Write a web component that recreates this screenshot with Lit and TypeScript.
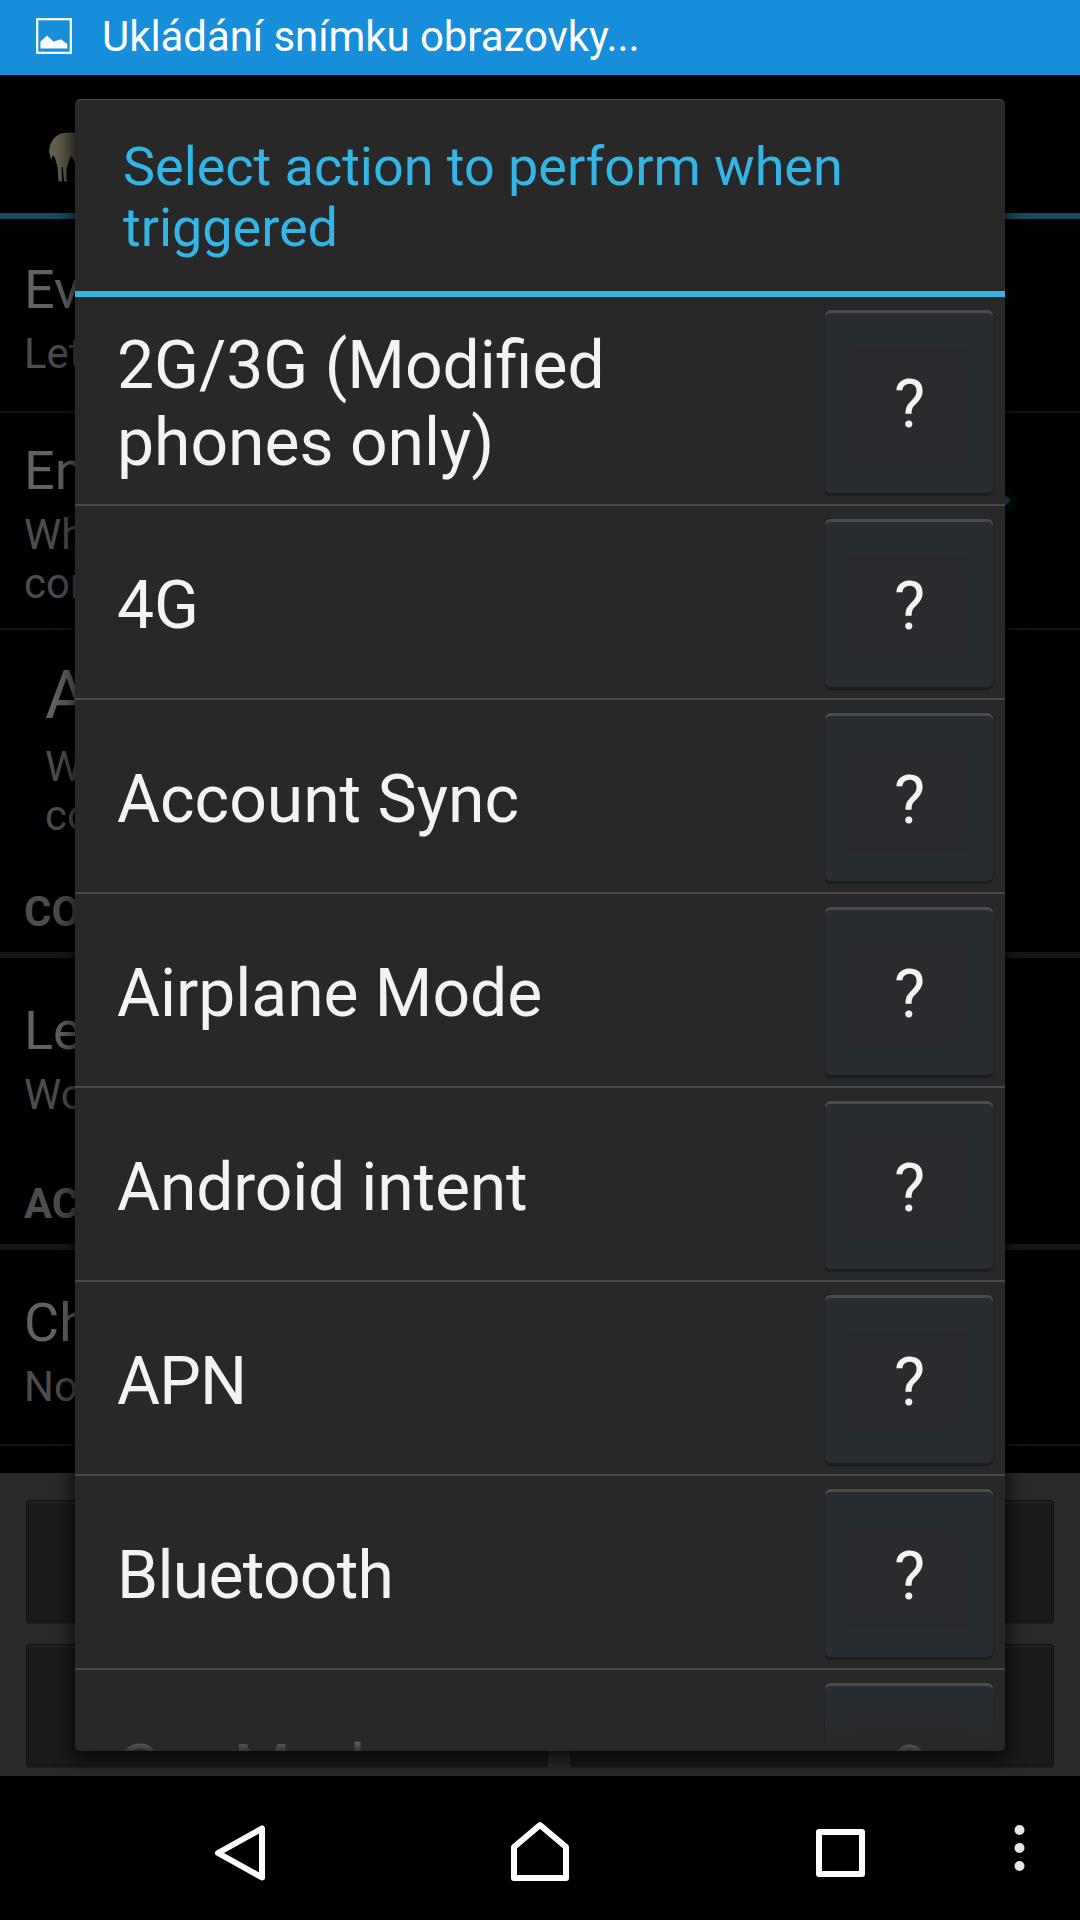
import { LitElement, html, css, nothing } from "lit";
import { customElement, property } from "lit/decorators.js";
import { styleMap } from "lit/directives/style-map.js";

interface BackItem {
  cls: string;
  title?: string;
  lines: string[];
}

interface Action {
  label: string;
  tracking?: number;
}

const BACK_ITEMS: BackItem[] = [
  { cls: "item first", title: "Ev", lines: ["Let"] },
  { cls: "item second", title: "En", lines: ["Wh", "con"] },
  { cls: "item nested", title: "A", lines: ["W", "co"] },
  { cls: "section conditions", lines: ["CO"] },
  { cls: "item plain", title: "Le", lines: ["Wo"] },
  { cls: "section actions", lines: ["AC"] },
  { cls: "item last", title: "Ch", lines: ["No"] },
];

const ACTIONS: Action[] = [
  { label: "2G/3G (Modified phones only)" },
  { label: "4G" },
  { label: "Account Sync" },
  { label: "Airplane Mode", tracking: -0.05 },
  { label: "Android intent", tracking: -0.17 },
  { label: "APN", tracking: -0.9 },
  { label: "Bluetooth", tracking: -0.72 },
  { label: "Car Mode", tracking: -0.3 },
];

@customElement("status-bar")
class StatusBar extends LitElement {
  static styles = css`
    :host {
      display: flex;
      align-items: center;
      height: 75px;
      flex: none;
      background: #168ed9;
      color: #fff;
      padding-left: 36px;
      gap: 30px;
      box-sizing: border-box;
    }
    .icon {
      display: block;
      margin-top: -3px;
    }
    .text {
      font-size: 42px;
      line-height: 49px;
      margin-top: -2px;
      letter-spacing: -0.07px;
      white-space: nowrap;
    }
  `;
  render() {
    return html`
      <svg class="icon" width="36" height="36" viewBox="0 0 36 36">
        <rect x="1.2" y="1.2" width="33.6" height="33.6" fill="none" stroke="#fff" stroke-width="2.2" />
        <path d="M4.5 30.5V23.5L11 17.5L17.5 23.5L25 21.2L31.3 26V30.5Z" fill="#fff" />
      </svg>
      <span class="text">Ukládání snímku obrazovky...</span>
    `;
  }
}

@customElement("event-screen")
class EventScreen extends LitElement {
  static styles = css`
    :host {
      display: flex;
      flex-direction: column;
      flex: 1;
      background: #000;
      color: #4c4c4c;
      font-size: 42px;
      line-height: 49px;
    }
    .header {
      height: 144px;
      flex: none;
      box-sizing: border-box;
      border-bottom: 6px solid #174c60;
      padding: 56px 0 0 48px;
    }
    .animal {
      display: block;
    }
    .list {
      display: flex;
      flex-direction: column;
      height: 1254px;
      flex: none;
    }
    .item {
      padding-left: 24px;
      box-sizing: border-box;
      border-bottom: 2px solid #141414;
    }
    .title {
      font-size: 54px;
      line-height: 63px;
      margin-bottom: 8px;
      color: #616161;
    }
    .first { height: 194px; padding-top: 39px; }
    .second { height: 217px; padding-top: 26px; }
    .nested { height: 210px; padding: 27px 0 0 45px; border: 0; }
    .nested .title { font-size: 66px; line-height: 77px; }
    .plain { height: 161px; padding-top: 41px; border: 0; }
    .last { height: 196px; padding-top: 41px; }
    .section {
      font-weight: 700;
      padding-left: 24px;
      box-sizing: border-box;
      border-bottom: 6px solid #161616;
    }
    .conditions { height: 118px; padding-top: 47px; }
    .actions { height: 131px; padding-top: 60px; }
    .panel {
      display: grid;
      grid-template-columns: 522px 484px;
      grid-template-rows: 122px 122px;
      gap: 22px;
      padding: 27px 24px 10px 26px;
      background: #2a2a2a;
      height: 303px;
      box-sizing: border-box;
    }
    .key {
      background: #181a1b;
      border-radius: 4px;
      border: 1px solid #111;
      box-shadow: inset 0 3px #202122, 0 2px #1e1e1e;
    }
  `;
  render() {
    return html`
      <div class="header">
        <svg class="animal" width="34" height="52" viewBox="0 0 34 52">
          <defs>
            <linearGradient id="fur" x1="0" y1="0" x2="1" y2="0">
              <stop offset="0.2" stop-color="#635f4a" />
              <stop offset="0.85" stop-color="#4d4a3c" />
            </linearGradient>
          </defs>
          <path
            d="M1 21C2 9 8 3 16 2L34 1V33L27 32L24 25.5L22.5 26L20.5 31L18.5 38V48L19.5 50.5H16L14.8 36H13.6L14 50.5H10.5L9.5 36L7 27L5 24L3 29L2 24Z"
            fill="url(#fur)"
          />
        </svg>
      </div>
      <div class="list">
        ${BACK_ITEMS.map(
          (i) => html`<div class=${i.cls}>
            ${i.title ? html`<div class="title">${i.title}</div>` : nothing}
            ${i.lines.map((l) => html`<div class="line">${l}</div>`)}
          </div>`
        )}
      </div>
      <div class="panel">
        <div class="key"></div>
        <div class="key"></div>
        <div class="key"></div>
        <div class="key"></div>
      </div>
    `;
  }
}

@customElement("action-row")
class ActionRow extends LitElement {
  static styles = css`
    :host {
      display: flex;
      flex: none;
      box-sizing: border-box;
      min-height: 194px;
      padding: 13px 12px 11px 42px;
      border-bottom: 2px solid #494949;
      color: #f3f3f3;
      font-size: 66px;
      line-height: 77px;
    }
    .label {
      flex: 1;
      align-self: center;
      padding: 5px 60px 0 0;
    }
    .help {
      width: 168px;
      display: flex;
      align-items: center;
      justify-content: center;
      border-radius: 5px;
      background: linear-gradient(#292b2f, #292b2f) center 56% / 120px calc(100% - 66px) no-repeat, #282d31;
      box-shadow: inset 0 3px #494c4f, 0 3px #1c1d1e, 0 0 0 1px #232323;
      padding: 6px 0 0 1px;
      box-sizing: border-box;
    }
  `;
  @property() label = "";
  @property({ type: Number }) tracking = 0;
  render() {
    return html`<div class="label" style=${styleMap({ letterSpacing: `${this.tracking}px` })}>${this.label}</div>
      <div class="help">?</div>`;
  }
}

@customElement("action-dialog")
class ActionDialog extends LitElement {
  static styles = css`
    :host {
      display: flex;
      flex-direction: column;
      overflow: hidden;
      border-radius: 6px;
      background: #282828;
      box-sizing: border-box;
      border-top: 1px solid #555;
    }
    .title {
      height: 197px;
      flex: none;
      box-sizing: border-box;
      padding: 36px 48px 0;
      border-bottom: 6px solid #33b5e5;
      color: #33b5e5;
      font-size: 54px;
      letter-spacing: -0.03px;
      line-height: 61px;
    }
    .list {
      flex: 1;
      min-height: 0;
      overflow: hidden;
      display: flex;
      flex-direction: column;
      position: relative;
    }
    .tall {
      min-height: 209px;
    }
    .fade {
      position: absolute;
      left: 0;
      right: 0;
      bottom: 0;
      height: 42px;
      background: linear-gradient(rgba(40, 40, 40, 0), rgba(40, 40, 40, 0.94));
    }
  `;
  render() {
    return html`
      <div class="title">Select action to perform when triggered</div>
      <div class="list">
        ${ACTIONS.map(
          (a, i) => html`<action-row
            class=${i === 0 ? "tall" : "row"}
            .label=${a.label}
            .tracking=${a.tracking ?? 0}
          ></action-row>`
        )}
        <div class="fade"></div>
      </div>
    `;
  }
}

@customElement("nav-bar")
class NavBar extends LitElement {
  static styles = css`
    :host {
      display: block;
      height: 144px;
      flex: none;
      background: #000;
    }
    .icons {
      display: block;
    }
  `;
  render() {
    return html`
      <svg class="icons" width="1080" height="144" viewBox="0 1776 1080 144" fill="none" stroke="#fff" stroke-width="6" stroke-linejoin="round">
        <path d="M262 1828.5V1877.5L218 1853Z" />
        <path d="M514 1878V1847L540 1825L566 1847V1878Z" />
        <rect x="819" y="1832" width="43" height="42" />
        <g fill="#e6e6e6" stroke="none">
          <circle cx="1019.5" cy="1830" r="5" />
          <circle cx="1019.5" cy="1848" r="5" />
          <circle cx="1019.5" cy="1866" r="5" />
        </g>
      </svg>
    `;
  }
}

@customElement("app-root")
class AppRoot extends LitElement {
  static styles = css`
    :host {
      display: flex;
      flex-direction: column;
      position: relative;
      width: 1080px;
      height: 1920px;
      overflow: hidden;
      background: #000;
      font-family: Roboto, "Liberation Sans", sans-serif;
    }
    .glow {
      position: absolute;
      left: 985px;
      top: 475px;
    }
    .dialog {
      position: absolute;
      left: 75px;
      top: 99px;
      width: 930px;
      height: 1652px;
      box-shadow: 0 6px 20px 2px rgba(0, 0, 0, 0.75);
    }
  `;
  render() {
    return html`
      <status-bar></status-bar>
      <event-screen></event-screen>
      <nav-bar></nav-bar>
      <svg class="glow" width="50" height="50" viewBox="0 0 50 50">
        <defs>
          <radialGradient id="g">
            <stop offset="0.4" stop-color="#06161b" stop-opacity="0.5" />
            <stop offset="1" stop-color="#06161b" stop-opacity="0" />
          </radialGradient>
        </defs>
        <circle cx="15" cy="26" r="22" fill="url(#g)" />
        <path d="M15 15L25.5 25.5L15 36Z" fill="#1b5064" />
      </svg>
      <action-dialog class="dialog"></action-dialog>
    `;
  }
}
